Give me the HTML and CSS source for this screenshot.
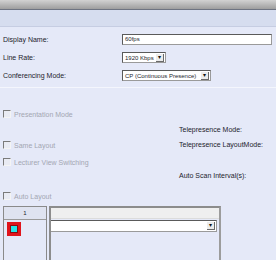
FILE: index.html
```html
<!DOCTYPE html>
<html lang="en">
<head>
    <meta charset="UTF-8">
    <title>Conference Settings</title>
    <link rel="stylesheet" href="styles.css">
</head>
<body>
    <div class="topbar"></div>
    <div class="band"></div>

    <div class="general">
        <div class="row row-name">
            <label class="label">Display Name:</label>
            <div class="textbox">60fps</div>
        </div>
        <div class="row row-rate">
            <label class="label">Line Rate:</label>
            <div class="select rate">
                <span class="value">1920 Kbps</span>
                <span class="arrow">&#9662;</span>
            </div>
        </div>
        <div class="row row-mode">
            <label class="label">Conferencing Mode:</label>
            <div class="select mode">
                <span class="value">CP (Continuous Presence)</span>
                <span class="arrow">&#9662;</span>
            </div>
        </div>
    </div>

    <div class="options">
        <div class="check-row first">
            <span class="check"></span>Presentation Mode
        </div>
        <div class="tele-row tp-mode">Telepresence Mode:</div>
        <div class="split">
            <div class="check-row">
                <span class="check"></span>Same Layout
            </div>
            <div class="tele">Telepresence LayoutMode:</div>
        </div>
        <div class="check-row lecturer">
            <span class="check"></span>Lecturer View Switching
        </div>
        <div class="tele-row scan">Auto Scan Interval(s):</div>
        <div class="check-row auto">
            <span class="check"></span>Auto Layout
        </div>
    </div>

    <div class="layout">
        <div class="cells">
            <div class="cells-head">1</div>
            <div class="cell-body">
                <span class="swatch"></span>
            </div>
        </div>
        <div class="panel">
            <div class="panel-head"></div>
            <div class="select panel-select">
                <span class="value"></span>
                <span class="arrow">&#9662;</span>
            </div>
        </div>
    </div>
</body>
</html>
```

FILE: styles.css
```css
body {
    margin: 0;
    width: 276px;
    height: 260px;
    overflow: hidden;
    background-color: #e5e9f8;
    font-family: "Liberation Sans", Arial, sans-serif;
    font-size: 7px;
    color: #1c1c2c;
}
.topbar {
    height: 9px;
    background: linear-gradient(#d2d2d2, #9e9e9e);
    border-bottom: 1px solid #6e7482;
}
.band {
    height: 16px;
    background-color: #d6ddef;
    border-bottom: 1px solid #c6cde2;
}
.general {
    padding: 7px 4px 0 3px;
    height: 53px;
    border-bottom: 1px solid #f4f6fd;
}
.row {
    display: flex;
    align-items: center;
}
.row-name {
    height: 11px;
}
.row-rate {
    margin-top: 7px;
    height: 11px;
}
.row-mode {
    margin-top: 7px;
    height: 11px;
}
.label {
    width: 119px;
}
.textbox {
    flex: 1;
    height: 9px;
    line-height: 9px;
    background-color: #fff;
    border: 1px solid #9a9a9a;
    border-top-color: #5a5a5a;
    border-left-color: #5a5a5a;
    padding-left: 2px;
    font-size: 6px;
}
.select {
    display: flex;
    align-items: center;
    height: 9px;
    background-color: #fff;
    border: 1px solid #9a9a9a;
    border-top-color: #5a5a5a;
    border-left-color: #5a5a5a;
    font-size: 6px;
}
.select .value {
    flex: 1;
    padding-left: 2px;
    white-space: nowrap;
}
.select .arrow {
    width: 7px;
    height: 7px;
    margin-right: 1px;
    background-color: #ececec;
    border-right: 1px solid #6a6a6a;
    border-bottom: 1px solid #6a6a6a;
    font-size: 6px;
    line-height: 7px;
    text-align: center;
    color: #111;
}
.rate {
    width: 42px;
}
.mode {
    width: 87px;
}
.options {
    padding: 22px 0 6px 3px;
    color: #a3a6b2;
}
.check-row {
    display: flex;
    align-items: center;
    height: 8px;
    gap: 3px;
}
.check {
    width: 6px;
    height: 6px;
    border-top: 1px solid #7a7a7a;
    border-left: 1px solid #7a7a7a;
    border-right: 1px solid #f4f4f4;
    border-bottom: 1px solid #f4f4f4;
    background-color: #e9ebf3;
}
.tele-row, .tele {
    color: #1c1c2c;
    padding-left: 176px;
    height: 8px;
    line-height: 8px;
}
.tele {
    padding-left: 0;
    margin-left: auto;
    width: 97px;
}
.tp-mode {
    margin-top: 8px;
}
.split {
    display: flex;
    margin-top: 7px;
}
.lecturer {
    margin-top: 9px;
}
.scan {
    margin-top: 6px;
}
.auto {
    margin-top: 12px;
}
.layout {
    display: flex;
    gap: 2px;
    padding-left: 3px;
}
.cells {
    width: 42px;
    height: 60px;
    border: 1px solid #8a8a8a;
    border-bottom: none;
}
.cells-head {
    height: 12px;
    line-height: 12px;
    text-align: center;
    background-color: #dfe3f0;
    border-bottom: 1px solid #9a9a9a;
    font-size: 6px;
}
.cell-body {
    padding: 2px 0 0 3px;
}
.swatch {
    display: block;
    width: 8px;
    height: 8px;
    background-color: #27e3e8;
    border: 3px solid #e0141c;
    outline: 1px solid #8a0a10;
    outline-offset: -4px;
}
.panel {
    width: 168px;
    height: 60px;
    border-top: 2px solid #8c8c8c;
    border-left: 2px solid #8c8c8c;
    border-right: 2px solid #9c9c9c;
}
.panel-head {
    height: 10px;
    background-color: #efefef;
    border-bottom: 1px solid #dcdcdc;
}
.panel-select {
    margin: 1px 2px 0 0;
    height: 10px;
    border-left: none;
}
```
